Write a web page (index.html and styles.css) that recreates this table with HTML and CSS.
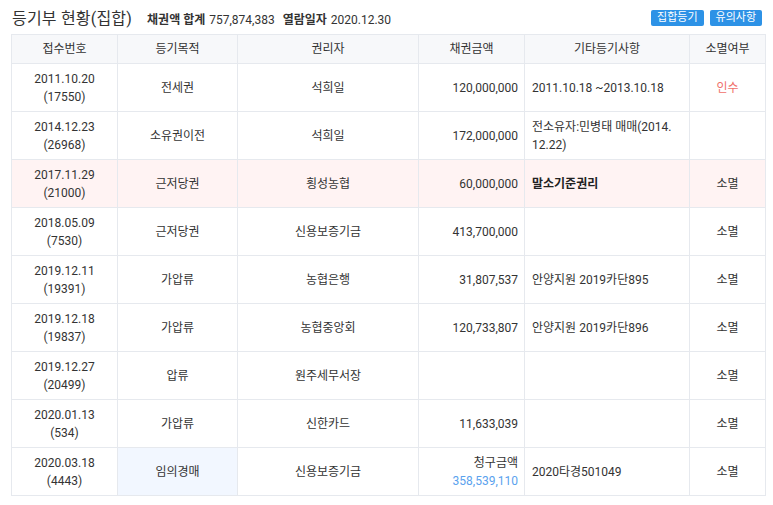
FILE: index.html
```html
<!DOCTYPE html>
<html lang="ko">
<head>
<meta charset="utf-8">
<link rel="stylesheet" href="styles.css">
</head>
<body>
<div class="wrap">
  <div class="topbar">
    <div class="heading">
      <h1 class="title">등기부 현황(집합)</h1>
      <span class="sum"><b>채권액 합계</b> 757,874,383</span>
      <span class="sum"><b>열람일자</b> 2020.12.30</span>
    </div>
    <div class="btns">
      <span class="btn">집합등기</span>
      <span class="btn">유의사항</span>
    </div>
  </div>
  <table class="reg">
    <colgroup>
      <col class="c1"><col class="c2"><col class="c3"><col class="c4"><col class="c5"><col class="c6">
    </colgroup>
    <thead>
      <tr><th>접수번호</th><th>등기목적</th><th>권리자</th><th>채권금액</th><th>기타등기사항</th><th>소멸여부</th></tr>
    </thead>
    <tbody>
      <tr><td class="ctr">2011.10.20<br>(17550)</td><td class="ctr">전세권</td><td class="ctr">석희일</td><td class="num">120,000,000</td><td class="etc">2011.10.18 ~2013.10.18</td><td class="ctr red">인수</td></tr>
      <tr><td class="ctr">2014.12.23<br>(26968)</td><td class="ctr">소유권이전</td><td class="ctr">석희일</td><td class="num">172,000,000</td><td class="etc">전소유자:민병태 매매(2014.<br>12.22)</td><td class="ctr"></td></tr>
      <tr class="hl"><td class="ctr">2017.11.29<br>(21000)</td><td class="ctr">근저당권</td><td class="ctr">횡성농협</td><td class="num">60,000,000</td><td class="etc strong">말소기준권리</td><td class="ctr">소멸</td></tr>
      <tr><td class="ctr">2018.05.09<br>(7530)</td><td class="ctr">근저당권</td><td class="ctr">신용보증기금</td><td class="num">413,700,000</td><td class="etc"></td><td class="ctr">소멸</td></tr>
      <tr><td class="ctr">2019.12.11<br>(19391)</td><td class="ctr">가압류</td><td class="ctr">농협은행</td><td class="num">31,807,537</td><td class="etc">안양지원 2019카단895</td><td class="ctr">소멸</td></tr>
      <tr><td class="ctr">2019.12.18<br>(19837)</td><td class="ctr">가압류</td><td class="ctr">농협중앙회</td><td class="num">120,733,807</td><td class="etc">안양지원 2019카단896</td><td class="ctr">소멸</td></tr>
      <tr><td class="ctr">2019.12.27<br>(20499)</td><td class="ctr">압류</td><td class="ctr">원주세무서장</td><td class="num"></td><td class="etc"></td><td class="ctr">소멸</td></tr>
      <tr><td class="ctr">2020.01.13<br>(534)</td><td class="ctr">가압류</td><td class="ctr">신한카드</td><td class="num">11,633,039</td><td class="etc"></td><td class="ctr">소멸</td></tr>
      <tr><td class="ctr">2020.03.18<br>(4443)</td><td class="ctr blue-bg">임의경매</td><td class="ctr">신용보증기금</td><td class="num">청구금액<br><span class="claim">358,539,110</span></td><td class="etc">2020타경501049</td><td class="ctr">소멸</td></tr>
    </tbody>
  </table>
</div>
</body>
</html>
```
FILE: styles.css
```css
* { box-sizing: border-box; }
html, body { margin: 0; padding: 0; background: #fff; }
body {
  font-family: Roboto, "Noto Sans CJK KR", sans-serif;
  color: #333;
  font-size: 12px;
}
.wrap { padding: 0 8px 0 11px; }
.topbar {
  display: flex;
  justify-content: space-between;
  align-items: center;
  height: 34px;
  padding-bottom: 1px;
}
.heading { display: flex; align-items: baseline; gap: 8px; padding-left: 1px; }
.title {
  margin: 0 7px 0 0;
  font-size: 16px;
  font-weight: 400;
  color: #333;
  letter-spacing: 0.2px;
}
.sum { font-size: 12px; color: #333; }
.sum b { font-weight: 700; margin-right: 1px; }
.btns { display: flex; gap: 6px; padding-right: 3px; margin-top: 3px; }
.btn {
  display: inline-block;
  background: #2d92e6;
  color: #fff;
  font-size: 11px;
  line-height: 15px;
  height: 16px;
  padding: 0 6px;
  border-radius: 2px;
}
.reg {
  width: 754px;
  border-collapse: collapse;
  table-layout: fixed;
}
.c1 { width: 106px; }
.c2 { width: 120px; }
.c3 { width: 181px; }
.c4 { width: 106px; }
.c5 { width: 165px; }
.c6 { width: 76px; }
.reg th, .reg td {
  border: 1px solid #e6e9ee;
  line-height: 18px;
}
.reg th {
  background: #f7f8fa;
  font-weight: 400;
  height: 29px;
  padding: 0;
  text-align: center;
}
.reg td { height: 48px; padding: 0 6px; }
.ctr { text-align: center; }
.num { text-align: right; }
.etc { text-align: left; padding-left: 7px !important; }
.strong { font-weight: 700; color: #222; }
.red { color: #f0706a; }
.hl td { background: #fff3f3; }
.blue-bg { background: #f2f7ff; }
.claim { color: #5aa2ee; }
```
